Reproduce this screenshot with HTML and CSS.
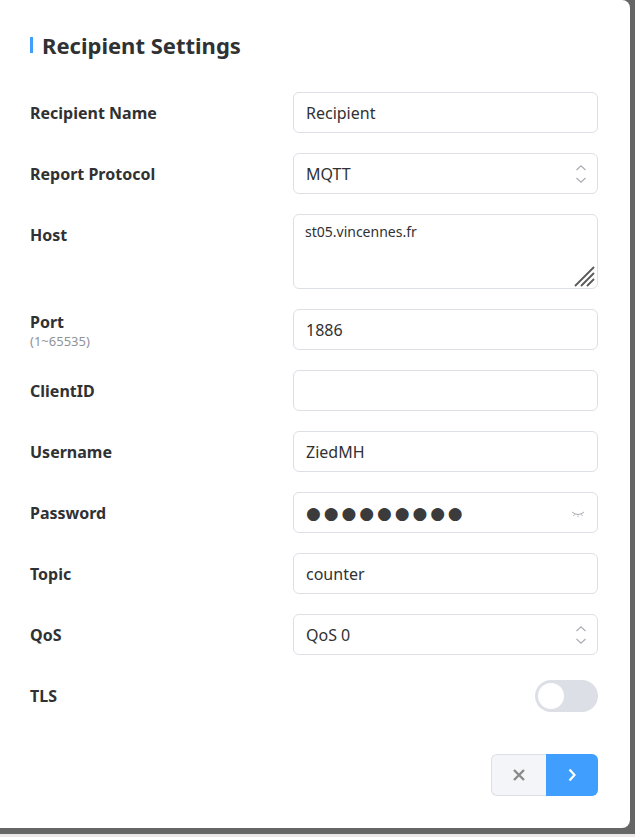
FILE: index.html
```html
<!DOCTYPE html>
<html>
<head>
<meta charset="utf-8">
<link rel="stylesheet" href="styles.css">
</head>
<body>
<div class="panel">
  <h2 class="title">Recipient Settings</h2>
  <div class="form">
    <div class="label">Recipient Name</div>
    <div class="control"><div class="input">Recipient</div></div>

    <div class="label">Report Protocol</div>
    <div class="control"><div class="input select">MQTT
      <svg class="arrows" width="12" height="20" viewBox="0 0 12 20"><path d="M1.5 6 L6 1.8 L10.5 6" fill="none" stroke="#a8abb2" stroke-width="1.1"/><path d="M1.5 14 L6 18.2 L10.5 14" fill="none" stroke="#a8abb2" stroke-width="1.1"/></svg>
    </div></div>

    <div class="label">Host</div>
    <div class="control"><div class="input textarea">st05.vincennes.fr
      <svg class="grip" width="24" height="24" viewBox="0 0 24 24"><path d="M21 3 L2 22 M21 9 L8 22 M21 15 L14 22" stroke="#5a5a5a" stroke-width="1.8"/></svg>
    </div></div>

    <div class="label multi"><span>Port</span><span class="sub">(1~65535)</span></div>
    <div class="control"><div class="input">1886</div></div>

    <div class="label">ClientID</div>
    <div class="control"><div class="input"></div></div>

    <div class="label">Username</div>
    <div class="control"><div class="input">ZiedMH</div></div>

    <div class="label">Password</div>
    <div class="control"><div class="input password"><span class="dots">●●●●●●●●●</span>
      <svg class="eye" width="14" height="8" viewBox="0 0 14 8"><path d="M1 2 Q7 7 13 2" fill="none" stroke="#a8abb2" stroke-width="1"/><path d="M3.5 4.3 L2.5 6 M7 5.5 L7 7.2 M10.5 4.3 L11.5 6" stroke="#a8abb2" stroke-width="0.9"/></svg>
    </div></div>

    <div class="label">Topic</div>
    <div class="control"><div class="input">counter</div></div>

    <div class="label">QoS</div>
    <div class="control"><div class="input select">QoS 0
      <svg class="arrows" width="12" height="20" viewBox="0 0 12 20"><path d="M1.5 6 L6 1.8 L10.5 6" fill="none" stroke="#a8abb2" stroke-width="1.1"/><path d="M1.5 14 L6 18.2 L10.5 14" fill="none" stroke="#a8abb2" stroke-width="1.1"/></svg>
    </div></div>

    <div class="label tls">TLS</div>
    <div class="control right tls"><div class="switch"><span class="knob"></span></div></div>
  </div>
  <div class="actions">
    <div class="btn cancel"><svg width="14" height="14" viewBox="0 0 14 14"><path d="M2 2 L12 12 M12 2 L2 12" stroke="#8a8a8a" stroke-width="2.4"/></svg></div>
    <div class="btn next"><svg width="10" height="14" viewBox="0 0 10 14"><path d="M2.5 1.5 L7.5 7 L2.5 12.5" fill="none" stroke="#fff" stroke-width="2.2"/></svg></div>
  </div>
</div>
<div class="bottom"></div>
</body>
</html>
```
FILE: styles.css
```css
html, body {
  margin: 0;
  padding: 0;
}
body {
  background: #666666;
  width: 635px;
  height: 837px;
  overflow: hidden;
  font-family: "Noto Sans", "Open Sans", sans-serif;
  color: #303133;
}
.panel {
  width: 630px;
  height: 828px;
  box-sizing: border-box;
  background: #ffffff;
  border-radius: 0 8px 8px 0;
  padding: 31px 32px 0 30px;
}
.title {
  margin: 0;
  font-size: 22px;
  line-height: 28px;
  font-weight: 700;
  color: #303133;
  padding-left: 12px;
  height: 28px;
  display: flex;
  align-items: center;
  position: relative;
}
.title::before {
  content: "";
  position: absolute;
  left: 0;
  top: 6px;
  width: 3px;
  height: 16px;
  background: #409eff;
}
.form {
  margin-top: 33px;
  display: grid;
  grid-template-columns: 263px 305px;
  row-gap: 20px;
}
.label {
  box-sizing: border-box;
  font-size: 16px;
  font-weight: 700;
  color: #303133;
  height: 41px;
  display: flex;
  flex-direction: column;
  justify-content: center;
  align-self: start;
  line-height: 20px;
}
.label.multi {
  padding-top: 3px;
}
.label.multi .sub {
  font-size: 13px;
  font-weight: 400;
  color: #909399;
  line-height: 18px;
}
.input {
  position: relative;
  box-sizing: border-box;
  height: 41px;
  border: 1px solid #dcdfe6;
  border-radius: 6px;
  padding: 0 12px;
  font-size: 16px;
  color: #303133;
  display: flex;
  align-items: center;
}
.input.textarea {
  height: 75px;
  align-items: flex-start;
  font-size: 14px;
  padding-top: 7px;
  padding-left: 11px;
}
.grip {
  position: absolute;
  right: 0;
  bottom: 0;
}
.arrows {
  position: absolute;
  right: 10px;
  top: 10px;
}
.dots {
  font-size: 17px;
  letter-spacing: 2.9px;
  color: #3b3b3b;
  font-family: "DejaVu Sans", sans-serif;
}
.eye {
  position: absolute;
  right: 12px;
  top: 17px;
}
.right {
  display: flex;
  justify-content: flex-end;
}
.tls {
  margin-top: 5px;
  height: 32px;
}
.label.tls {
  height: 32px;
}
.switch {
  width: 63px;
  height: 32px;
  border-radius: 16px;
  background: #dcdfe6;
  position: relative;
}
.knob {
  position: absolute;
  left: 3px;
  top: 3px;
  width: 26px;
  height: 26px;
  border-radius: 50%;
  background: #ffffff;
}
.actions {
  margin-top: 42px;
  display: flex;
  justify-content: flex-end;
}
.btn {
  height: 42px;
  box-sizing: border-box;
  display: flex;
  align-items: center;
  justify-content: center;
}
.cancel {
  width: 55px;
  background: #f4f5f8;
  border: 1px solid #dcdfe6;
  border-right: none;
  border-radius: 6px 0 0 6px;
}
.next {
  width: 52px;
  background: #409eff;
  border-radius: 0 6px 6px 0;
}
.bottom {
  margin-top: 6px;
  height: 3px;
  background: #ece8ea;
}
```
